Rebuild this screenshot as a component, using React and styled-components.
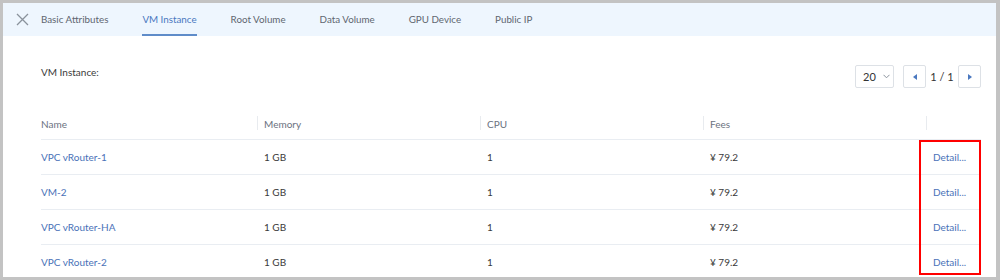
import React from "react";
import styled, { createGlobalStyle } from "styled-components";

const GlobalStyle = createGlobalStyle`
  html, body {
    margin: 0;
    padding: 0;
    background: #c3c3c3;
    font-family: Lato, "Noto Sans", sans-serif;
  }
`;

const Frame = styled.div`
  width: 1000px;
  height: 280px;
  box-sizing: border-box;
  padding: 3px 4px 3px 3px;
  overflow: hidden;
`;

const Panel = styled.div`
  background: #ffffff;
  height: 100%;
  overflow: hidden;
`;

const TabBar = styled.div`
  height: 33px;
  background: #eef6fe;
  display: flex;
  align-items: stretch;
`;

const Close = styled.div`
  width: 38px;
  display: flex;
  align-items: center;
  justify-content: center;
  padding-bottom: 1px;
  box-sizing: border-box;
`;

const Tabs = styled.div`
  display: flex;
  gap: 34px;
`;

const Tab = styled.div`
  display: flex;
  align-items: center;
  font-size: 9.8px;
  color: ${p => (p.active ? "#4a78bf" : "#5f6670")};
  border-bottom: 2px solid ${p => (p.active ? "#5f8cc9" : "transparent")};
  box-sizing: border-box;
`;

const Content = styled.div`
  padding: 29px 15px 0 38px;
`;

const Toolbar = styled.div`
  display: flex;
  justify-content: space-between;
  align-items: flex-start;
  height: 24px;
`;

const Title = styled.div`
  font-size: 10px;
  color: #3a3a3a;
  line-height: 14px;
`;

const Pager = styled.div`
  display: flex;
  align-items: center;
`;

const SizeSelect = styled.div`
  width: 39px;
  height: 23px;
  box-sizing: border-box;
  border: 1px solid #dde1e6;
  border-radius: 2px;
  display: flex;
  align-items: center;
  padding-left: 7px;
  gap: 7px;
  font-size: 11px;
  color: #333;
  margin-right: 9px;
`;

const PageBtn = styled.div`
  width: 23px;
  height: 23px;
  box-sizing: border-box;
  border: 1px solid #dde1e6;
  border-radius: 2px;
  display: flex;
  align-items: center;
  justify-content: center;
`;

const PageText = styled.span`
  font-size: 11px;
  color: #333;
  width: 32px;
  text-align: center;
`;

const TableWrap = styled.div`
  position: relative;
  margin-top: 19px;
`;

const Table = styled.table`
  width: 940px;
  border-collapse: collapse;
  table-layout: fixed;
  font-size: 10px;
`;

const Th = styled.th`
  position: relative;
  height: 31px;
  font-weight: normal;
  text-align: left;
  color: #6b7280;
  padding: 0 0 0 ${p => (p.first ? 0 : 7)}px;
  border-bottom: 1px solid #e9edf2;
  &::before {
    content: "";
    display: ${p => (p.first ? "none" : "block")};
    position: absolute;
    left: 0;
    top: 8px;
    width: 1px;
    height: 14px;
    background: #e8ebef;
  }
`;

const Td = styled.td`
  height: 34px;
  padding: 0 0 0 ${p => (p.first ? 0 : 7)}px;
  border-bottom: 1px solid #e9edf2;
  color: ${p => (p.link ? "#4a72b8" : "#3a3a3a")};
  white-space: nowrap;
`;

const Highlight = styled.div`
  position: absolute;
  right: 0;
  top: 32px;
  width: 62px;
  height: 135px;
  box-sizing: border-box;
  border: 2px solid #ff0000;
  pointer-events: none;
`;

const rows = [
  { name: "VPC vRouter-1", memory: "1 GB", cpu: "1", fee: "¥ 79.2" },
  { name: "VM-2", memory: "1 GB", cpu: "1", fee: "¥ 79.2" },
  { name: "VPC vRouter-HA", memory: "1 GB", cpu: "1", fee: "¥ 79.2" },
  { name: "VPC vRouter-2", memory: "1 GB", cpu: "1", fee: "¥ 79.2" },
];

const tabs = ["Basic Attributes", "VM Instance", "Root Volume", "Data Volume", "GPU Device", "Public IP"];

const App = () => {
  return (
    <Frame>
      <GlobalStyle />
      <Panel>
        <TabBar>
          <Close>
            <svg width="13" height="13" viewBox="0 0 13 13">
              <path d="M1 1L12 12M12 1L1 12" stroke="#8a929c" strokeWidth="1.3" fill="none" />
            </svg>
          </Close>
          <Tabs>
            {tabs.map(t => (
              <Tab key={t} active={t === "VM Instance"}>{t}</Tab>
            ))}
          </Tabs>
        </TabBar>
        <Content>
          <Toolbar>
            <Title>VM Instance:</Title>
            <Pager>
              <SizeSelect>
                20
                <svg width="7" height="5" viewBox="0 0 7 5">
                  <path d="M0.5 0.8L3.5 3.8L6.5 0.8" stroke="#8a929c" strokeWidth="1" fill="none" />
                </svg>
              </SizeSelect>
              <PageBtn>
                <svg width="4" height="6" viewBox="0 0 4 6">
                  <path d="M4 0L0 3L4 6Z" fill="#4a78bf" />
                </svg>
              </PageBtn>
              <PageText>1 / 1</PageText>
              <PageBtn>
                <svg width="4" height="6" viewBox="0 0 4 6">
                  <path d="M0 0L4 3L0 6Z" fill="#4a78bf" />
                </svg>
              </PageBtn>
            </Pager>
          </Toolbar>
          <TableWrap>
            <Table>
              <colgroup>
                <col style={{ width: 216 }} />
                <col style={{ width: 223 }} />
                <col style={{ width: 223 }} />
                <col style={{ width: 223 }} />
                <col style={{ width: 55 }} />
              </colgroup>
              <thead>
                <tr>
                  <Th first>Name</Th>
                  <Th>Memory</Th>
                  <Th>CPU</Th>
                  <Th>Fees</Th>
                  <Th></Th>
                </tr>
              </thead>
              <tbody>
                {rows.map(r => (
                  <tr key={r.name}>
                    <Td first link>{r.name}</Td>
                    <Td>{r.memory}</Td>
                    <Td>{r.cpu}</Td>
                    <Td>{r.fee}</Td>
                    <Td link>Detail...</Td>
                  </tr>
                ))}
              </tbody>
            </Table>
            <Highlight />
          </TableWrap>
        </Content>
      </Panel>
    </Frame>
  );
};

export default App;
